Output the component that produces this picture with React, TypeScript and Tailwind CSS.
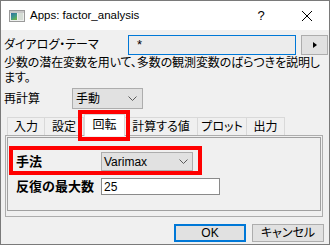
import React from "react";

function Chevron() {
  return (
    <svg width="9" height="5" viewBox="0 0 9 5" className="shrink-0">
      <path d="M0.5 0.5 L4.5 4.5 L8.5 0.5" stroke="#5a5a5a" strokeWidth="1" fill="none" />
    </svg>
  );
}

export default function App() {
  return (
    <div className="relative w-[330px] h-[245px] overflow-hidden border border-[#7a7a7a] bg-[#f0f0f0] text-[12px] text-black font-['Liberation_Sans','Noto_Sans_CJK_JP',sans-serif]">
      {/* Title bar */}
      <div className="flex h-[29px] items-center bg-white">
        <svg width="16" height="12" viewBox="0 0 16 12" className="ml-[8px] shrink-0">
          <defs>
            <linearGradient id="ig" x1="0" y1="0" x2="0.6" y2="1">
              <stop offset="0" stopColor="#2f6fa0" />
              <stop offset="0.6" stopColor="#3f9a8a" />
              <stop offset="1" stopColor="#6ab04c" />
            </linearGradient>
          </defs>
          <rect x="0.5" y="0.5" width="15" height="11" fill="#eef0ee" stroke="#9a9a9a" />
          <rect x="1" y="1" width="14" height="2" fill="#c8c8c8" />
          <rect x="2" y="3" width="6" height="7" fill="url(#ig)" />
          <rect x="9" y="3" width="5" height="7" fill="#d6ddd6" />
        </svg>
        <span className="ml-[5px] text-[11.5px]">Apps: factor_analysis</span>
        <div className="ml-auto flex h-full">
          <div className="flex h-full w-[46px] items-center justify-center text-[13px]">?</div>
          <div className="flex h-full w-[45px] items-center justify-center">
            <svg width="10" height="10" viewBox="0 0 10 10">
              <path d="M0 0 L10 10 M10 0 L0 10" stroke="#000" strokeWidth="1" />
            </svg>
          </div>
        </div>
      </div>

      {/* Body */}
      <div className="pl-[3px] pt-[5px]">
        {/* Row 1 */}
        <div className="flex h-[20px] items-center">
          <div className="w-[124px] whitespace-nowrap [font-feature-settings:'palt']">ダイアログ・テーマ</div>
          <div className="flex h-[20px] w-[168px] items-center border border-[#0078d7] bg-[#ececec] pl-[8px] text-[13px]">*</div>
          <div className="ml-[5px] flex h-[20px] w-[27px] items-center justify-center border border-[#adadad] bg-[#e1e1e1]">
            <svg width="4" height="6" viewBox="0 0 4 6">
              <polygon points="0,0 4,3 0,6" fill="#000" />
            </svg>
          </div>
        </div>

        {/* Description */}
        <div className="mt-[1px] whitespace-nowrap leading-[15px] tracking-[-0.1px] [font-feature-settings:'palt']">
          少数の潜在変数を用いて、多数の観測変数のばらつきを説明し
          <br />
          ます。
        </div>

        {/* Row 3 */}
        <div className="mt-[2px] flex h-[21px] items-center">
          <div className="w-[68px]">再計算</div>
          <div className="flex h-[21px] w-[71px] items-center justify-between border border-[#adadad] bg-[#e1e1e1] pl-[3px] pr-[5px]">
            <span>手動</span>
            <Chevron />
          </div>
        </div>

        {/* Tabs */}
        <div className="relative z-10 ml-[3px] flex h-[26px] items-end [font-feature-settings:'palt']">
          <div className="flex h-[18px] w-[38px] items-center justify-center border-l border-t border-r border-[#d9d9d9]">入力</div>
          <div className="flex h-[18px] w-[39px] items-center justify-center border-t border-r border-[#d9d9d9]">設定</div>
          <div className="mb-[-1px] flex h-[22px] w-[41px] items-center justify-center border-t border-x border-[#d9d9d9] bg-white pb-[1px]">回転</div>
          <div className="flex h-[18px] w-[73px] items-center justify-center border-t border-r border-[#d9d9d9]">計算する値</div>
          <div className="flex h-[18px] w-[49px] items-center justify-center border-t border-r border-[#d9d9d9]">プロット</div>
          <div className="flex h-[18px] w-[38px] items-center justify-center border-t border-r border-[#d9d9d9]">出力</div>
        </div>

        {/* Panel */}
        <div className="ml-[1px] h-[82px] w-[318px] border border-[#adadad] p-[1px]">
          <div className="h-[74px] border border-[#a0a0a0] pl-[8px] pt-[14px]">
            <div className="flex h-[19px] items-center">
              <div className="w-[85px] text-[13px] font-bold">手法</div>
              <div className="flex h-[19px] w-[92px] items-center justify-between border border-[#adadad] bg-[#e1e1e1] pl-[2px] pr-[4px]">
                <span>Varimax</span>
                <Chevron />
              </div>
            </div>
            <div className="mt-[7px] flex h-[17px] items-center">
              <div className="w-[85px] whitespace-nowrap text-[13px] font-bold">反復の最大数</div>
              <div className="flex h-[17px] w-[119px] items-center border border-[#8a8a8a] bg-white pl-[2px]">25</div>
            </div>
          </div>
        </div>

        {/* Buttons */}
        <div className="mt-[7px] flex justify-end gap-[6px] pr-[5px]">
          <div className="flex h-[18px] w-[72px] items-center justify-center border-2 border-[#0078d7] bg-[#e1e1e1]">OK</div>
          <div className="flex h-[18px] w-[72px] items-center justify-center border border-[#adadad] bg-[#e1e1e1] [font-feature-settings:'palt']">キャンセル</div>
        </div>
      </div>

      {/* Red annotation boxes */}
      <div className="pointer-events-none absolute left-[77px] top-[109px] z-20 h-[31px] w-[52px] border-4 border-[#ff0000]" />
      <div className="pointer-events-none absolute left-[8px] top-[145px] z-20 h-[29px] w-[193px] border-4 border-[#ff0000]" />
    </div>
  );
}
